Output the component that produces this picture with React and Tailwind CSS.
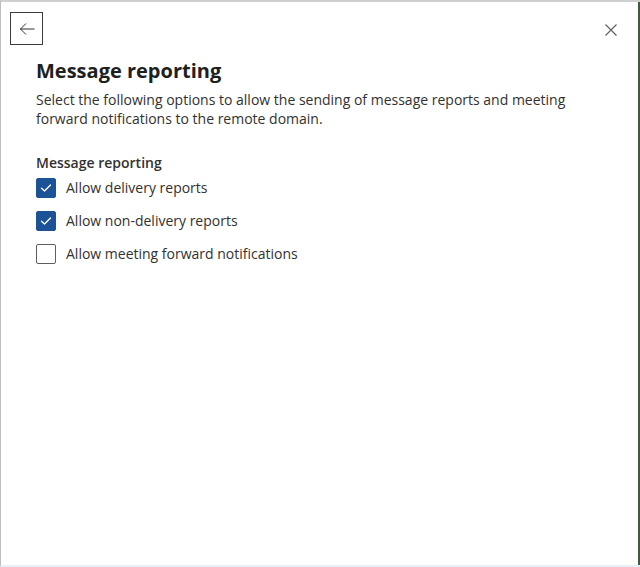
import React, { useState } from "react"

const options = [
    { id: "delivery", label: "Allow delivery reports", checked: true },
    { id: "nondelivery", label: "Allow non-delivery reports", checked: true },
    { id: "meeting", label: "Allow meeting forward notifications", checked: false },
]

const Checkbox = ({ checked, label, onToggle }) => (
    <label className="flex items-center h-[33px] cursor-pointer" onClick={onToggle}>
        <span
            className={`w-[20px] h-[20px] rounded-[2px] flex items-center justify-center border ${checked ? "bg-[#1c5396] border-[#1c5396]" : "bg-white border-[#605e5c]"}`}
        >
            {checked && (
                <svg width="12" height="12" viewBox="0 0 12 12" fill="none">
                    <path d="M1.5 6.2 L4.5 9 L10.5 3" stroke="white" strokeWidth="1.3" strokeLinecap="round" strokeLinejoin="round" />
                </svg>
            )}
        </span>
        <span className="ml-[10px] text-[14px] text-[#323130]">{label}</span>
    </label>
)

export default function App() {
    const [state, setState] = useState(options.map(o => o.checked))

    const toggle = (i) => setState(prev => prev.map((v, j) => (j === i ? !v : v)))

    return (
        <div
            className="w-[640px] h-[567px] bg-white border-t-2 border-t-[#cfcfcf] border-l border-l-[#bdbdbd] border-b-2 border-b-[#e6f0f8] flex"
            style={{ fontFamily: '"Segoe UI", "Open Sans", "Noto Sans", sans-serif' }}
        >
            <div className="flex-1 flex flex-col">
                <div className="flex justify-between items-start pl-[9px] pr-[19px] pt-[10px]">
                    <button className="w-[33px] h-[33px] border border-[#3b3b3b] flex items-center justify-center" aria-label="Back">
                        <svg width="16" height="16" viewBox="0 0 16 16" fill="none">
                            <path d="M15.5 8 H1 M7 2.5 L1.5 8 L7 13.5" stroke="#323130" strokeWidth="1" />
                        </svg>
                    </button>
                    <button className="mt-[10px] w-[16px] h-[16px] flex items-center justify-center" aria-label="Close">
                        <svg width="12" height="12" viewBox="0 0 12 12" fill="none">
                            <path d="M0.5 0.5 L11.5 11.5 M11.5 0.5 L0.5 11.5" stroke="#605e5c" strokeWidth="1.1" />
                        </svg>
                    </button>
                </div>

                <div className="pl-[35px] pr-[40px] pt-[12px]">
                    <h1 className="text-[20px] font-bold text-[#201f1e] leading-[28px]">Message reporting</h1>
                    <p className="mt-[5px] text-[14px] leading-[19px] text-[#323130]">
                        Select the following options to allow the sending of message reports and meeting forward notifications to the remote domain.
                    </p>

                    <div className="mt-[25px] text-[14px] font-semibold text-[#323130] leading-[20px]">Message reporting</div>
                    <div className="-mt-[2px] flex flex-col">
                        {options.map((o, i) => (
                            <Checkbox key={o.id} label={o.label} checked={state[i]} onToggle={() => toggle(i)} />
                        ))}
                    </div>
                </div>
            </div>
            <div className="w-[2px] h-full bg-[#3f5a3f]" />
        </div>
    )
}
